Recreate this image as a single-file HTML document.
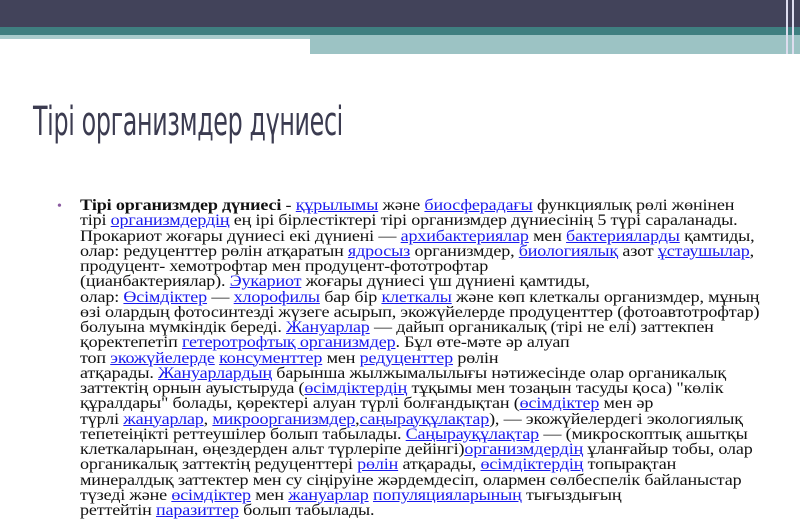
<!DOCTYPE html>
<html><head><meta charset="utf-8"><style>
body{margin:0;width:800px;height:521px;overflow:hidden;background:#fff;position:relative;font-family:"Liberation Serif",serif}
.top{position:absolute;left:0;top:0;width:800px;height:27px;background:#42435a}
.teal{position:absolute;left:0;top:27px;width:800px;height:8px;background:#3f7f80}
.teal2{position:absolute;left:0;top:35px;width:310px;height:4px;background:#a9cccc}
.lt{position:absolute;left:310px;top:35px;width:490px;height:19px;background:#9cc3c4}
.r{position:absolute;top:0;height:54px;width:2px;background:#dde}
h1{position:absolute;left:33px;top:99px;margin:0;font:normal 40px "DejaVu Sans Condensed","Liberation Sans",sans-serif;color:#3b3b50;letter-spacing:-0.5px;transform:scaleX(0.66);transform-origin:left top;white-space:nowrap}
.b{position:absolute;left:57px;top:199px;color:#8a5aa0;font-size:14px}
.t{position:absolute;left:80px;top:198px;font-size:16px;line-height:15.25px;color:#111;white-space:nowrap;letter-spacing:-0.15px;transform:scaleX(1.13);transform-origin:left top}
a{color:#1a1aee;text-decoration:underline}
</style></head><body>
<div class="top"></div><div class="teal"></div><div class="teal2"></div><div class="lt"></div>
<div class="r" style="left:786px"></div><div class="r" style="left:792px"></div>
<h1>Тірі организмдер дүниесі</h1>
<div class="b">•</div>
<div class="t"><b>Тірі организмдер дүниесі</b> - <a>құрылымы</a> және <a>биосферадағы</a> функциялық рөлі жөнінен<br>
тірі <a>организмдердің</a> ең ірі бірлестіктері тірі организмдер дүниесінің 5 түрі сараланады.<br>
Прокариот жоғары дүниесі екі дүниені — <a>архибактериялар</a> мен <a>бактерияларды</a> қамтиды,<br>
олар: редуценттер рөлін атқаратын <a>ядросыз</a> организмдер, <a>биологиялық</a> азот <a>ұстаушылар</a>,<br>
продуцент- хемотрофтар мен продуцент-фототрофтар<br>
(цианбактериялар). <a>Эукариот</a> жоғары дүниесі үш дүниені қамтиды,<br>
олар: <a>Өсімдіктер</a> — <a>хлорофилы</a> бар бір <a>клеткалы</a> және көп клеткалы организмдер, мұның<br>
өзі олардың фотосинтезді жүзеге асырып, экожүйелерде продуценттер (фотоавтотрофтар)<br>
болуына мүмкіндік береді. <a>Жануарлар</a> — дайып органикалық (тірі не елі) заттекпен<br>
қоректепетіп <a>гетеротрофтық организмдер</a>. Бұл өте-мәте әр алуап<br>
топ <a>экожүйелерде</a> <a>консументтер</a> мен <a>редуценттер</a> рөлін<br>
атқарады. <a>Жануарлардың</a> барынша жылжымалылығы нәтижесінде олар органикалық<br>
заттектің орнын ауыстыруда (<a>өсімдіктердің</a> тұқымы мен тозаңын тасуды қоса) "көлік<br>
құралдары" болады, қөректері алуан түрлі болғандықтан (<a>өсімдіктер</a> мен әр<br>
түрлі <a>жануарлар</a>, <a>микроорганизмдер</a>,<a>саңырауқұлақтар</a>), — экожүйелердегі экологиялық<br>
тепетеіңікті реттеушілер болып табылады. <a>Саңырауқұлақтар</a> — (микроскоптық ашытқы<br>
клеткаларынан, өңездерден альт түрлеріпе дейінгі)<a>организмдердің</a> ұланғайыр тобы, олар<br>
органикалық заттектің редуценттері <a>рөлін</a> атқарады, <a>өсімдіктердің</a> топырақтан<br>
минералдық заттектер мен су сіңіруіне жәрдемдесіп, олармен сөлбеспелік байланыстар<br>
түзеді және <a>өсімдіктер</a> мен <a>жануарлар</a> <a>популяцияларының</a> тығыздығың<br>
реттейтін <a>паразиттер</a> болып табылады.</div>
</body></html>
